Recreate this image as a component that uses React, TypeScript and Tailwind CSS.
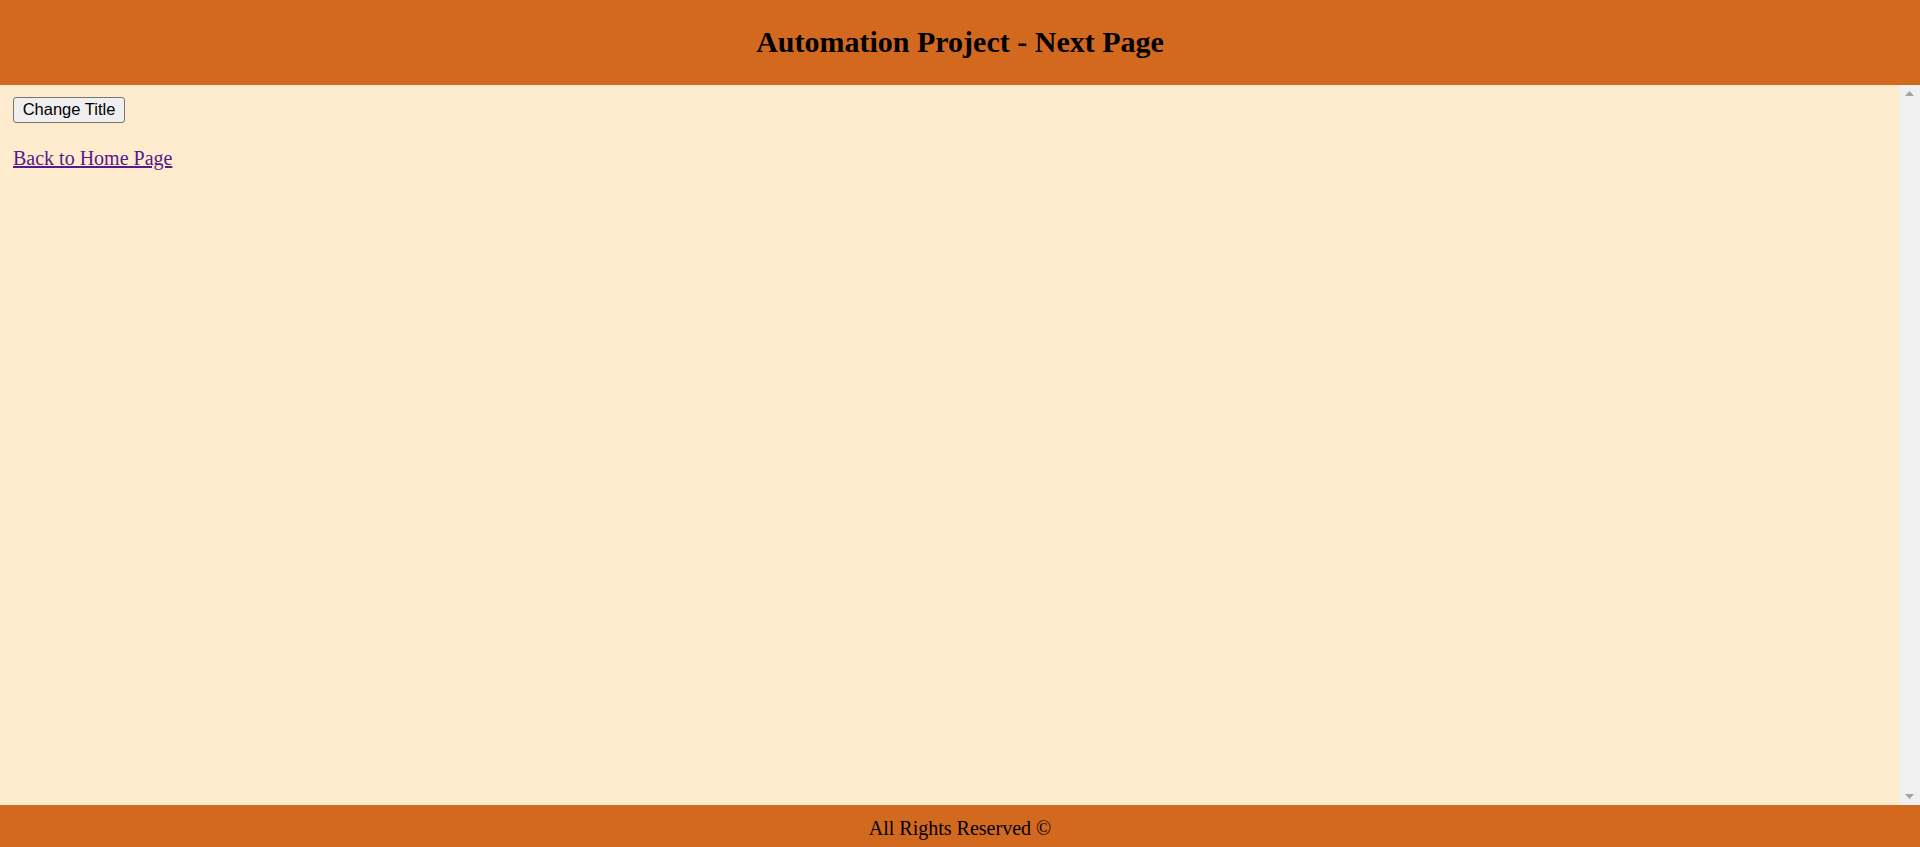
import { useState } from "react";

export default function App() {
  const [title, setTitle] = useState("Automation Project - Next Page");

  return (
    <div className="flex h-[847px] w-full flex-col bg-[#ffebcd] font-['Liberation_Serif',serif] text-black">
      <header className="flex h-[85px] shrink-0 items-center justify-center bg-[#d2691e] pb-[2px]">
        <h1 className="text-[30px] font-bold leading-none">{title}</h1>
      </header>

      <div className="flex min-h-0 flex-1">
        <main className="flex-1 px-[13px] pt-[12px]">
          <button
            onClick={() => setTitle("Title Changed!")}
            className="flex h-[26px] w-[112px] items-center justify-center rounded-[3px] border border-[#767676] bg-[#efefef] pb-[1px] font-['Liberation_Sans',Arial,sans-serif] text-[16.5px] leading-none"
          >
            Change Title
          </button>
          <p className="mt-[24px] text-[20px] leading-[23px]">
            <a href="#" className="text-[#551a8b] underline">
              Back to Home Page
            </a>
          </p>
        </main>

        {/* scrollbar strip */}
        <div className="flex w-[21px] shrink-0 flex-col items-center justify-between bg-[#f0f0f0] py-[6px]">
          <svg width="9" height="5" viewBox="0 0 9 5">
            <path d="M4.5 0 L9 5 L0 5 Z" fill="#a3a3a3" />
          </svg>
          <svg width="9" height="5" viewBox="0 0 9 5">
            <path d="M0 0 L9 0 L4.5 5 Z" fill="#a3a3a3" />
          </svg>
        </div>
      </div>

      <footer className="flex h-[42px] shrink-0 items-center justify-center bg-[#d2691e] pt-[3px] text-[20px]">
        All Rights Reserved ©
      </footer>
    </div>
  );
}
